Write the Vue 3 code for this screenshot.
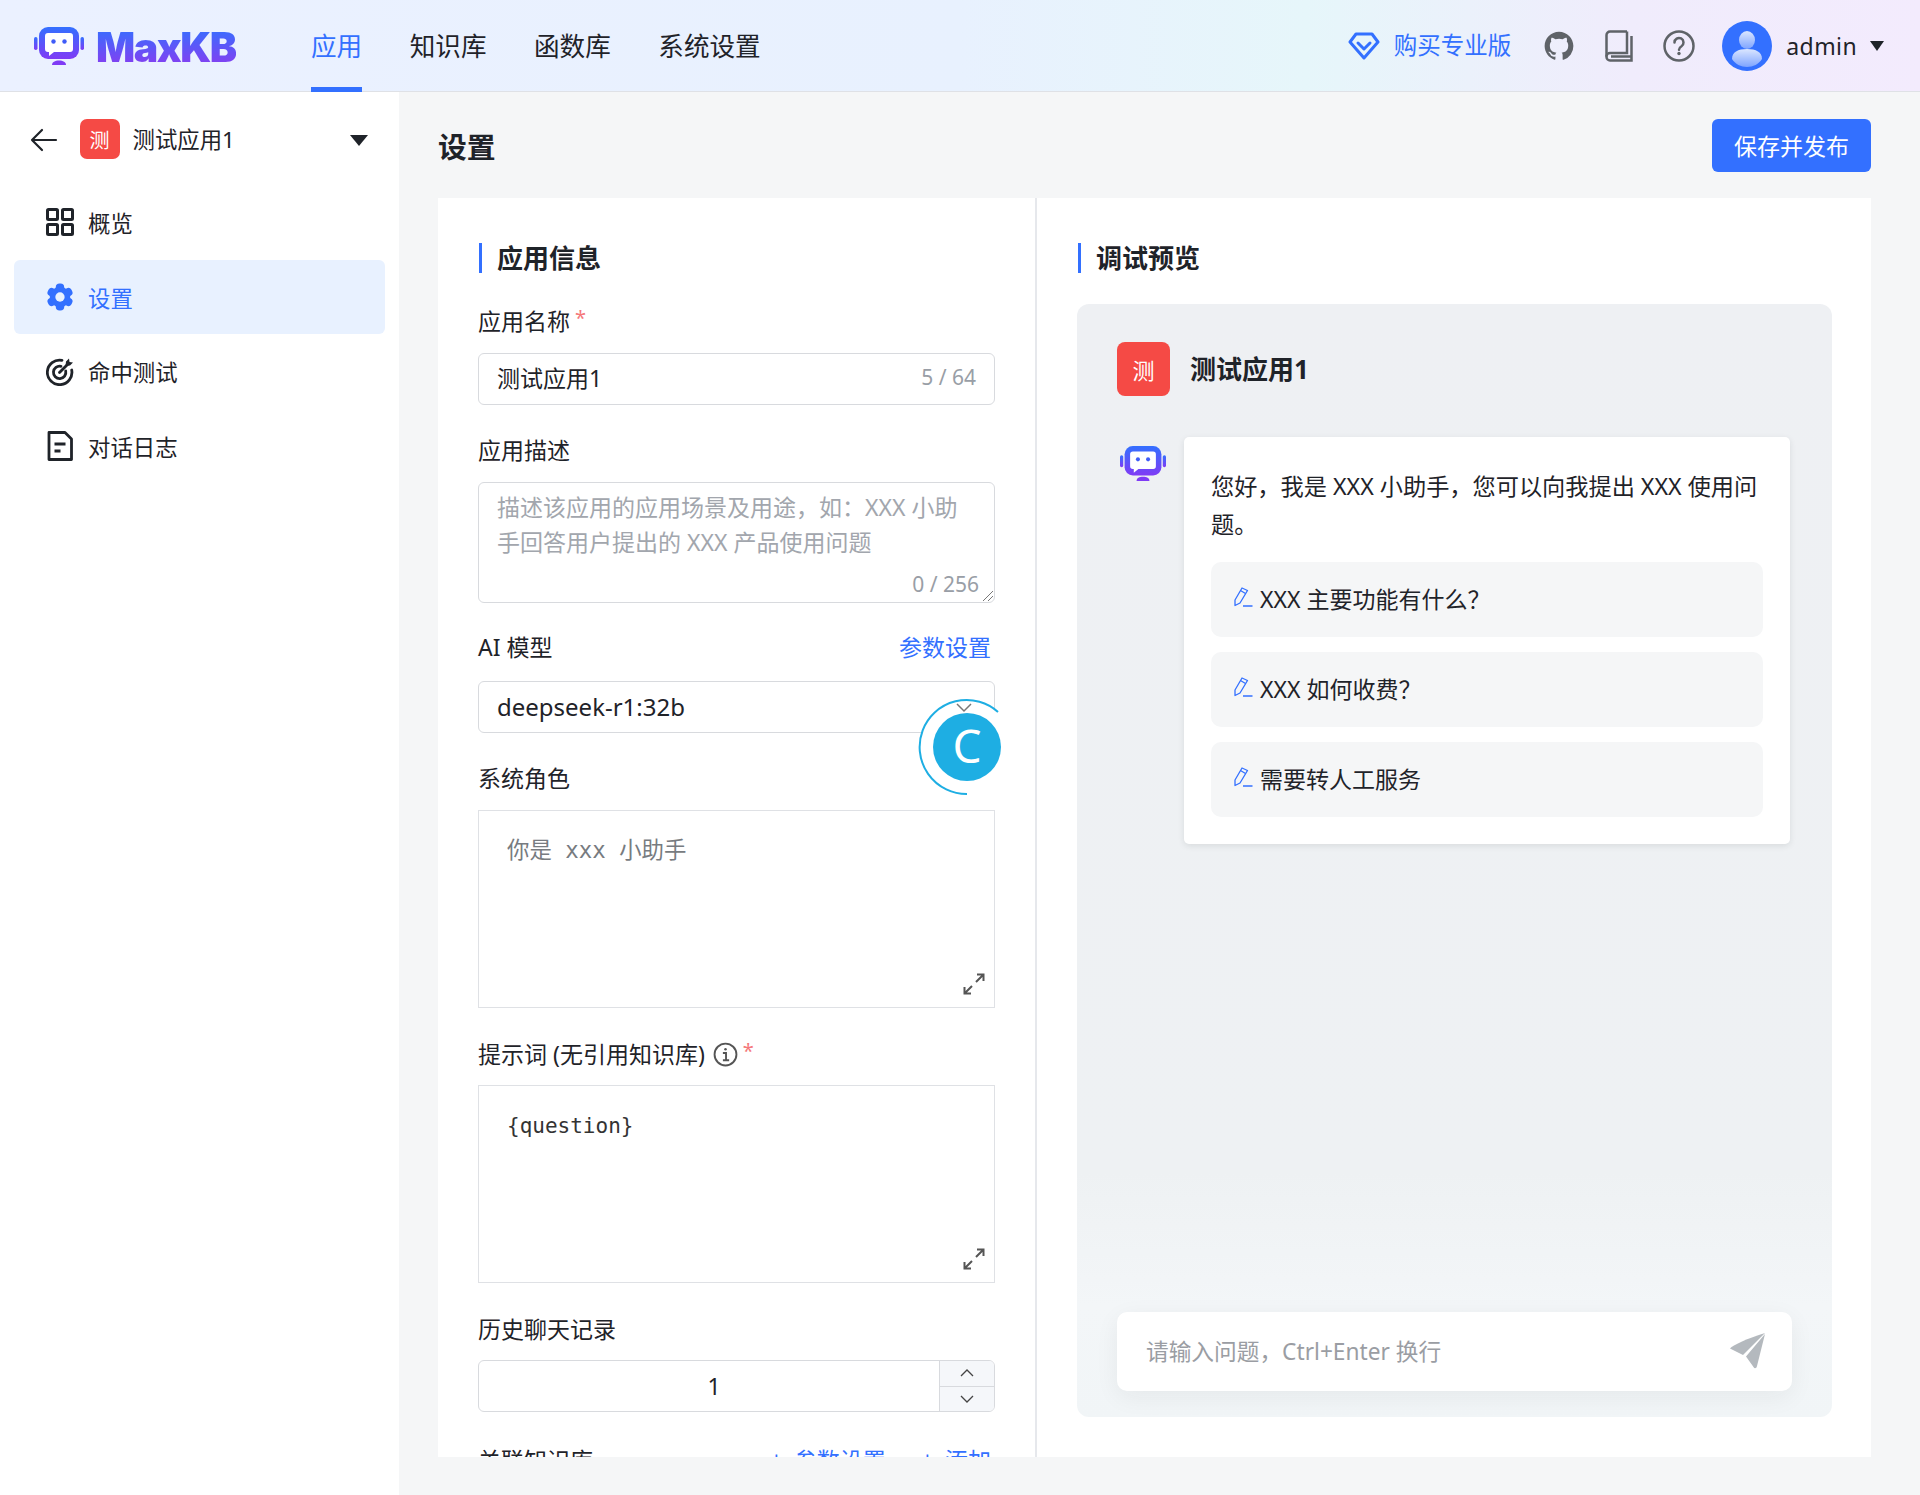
<template>
  <div class="app">
    <header class="top">
      <div class="brand">
        <svg class="logo-icon" viewBox="0 0 50 38">
          <defs>
            <linearGradient id="lg1" x1="0" y1="0" x2="0" y2="1">
              <stop offset="0" stop-color="#3370ff" />
              <stop offset="1" stop-color="#7f3bf5" />
            </linearGradient>
          </defs>
          <rect x="0" y="10" width="3.500" height="13" rx="1.700" fill="url(#lg1)" />
          <rect x="46.500" y="10" width="3.500" height="13" rx="1.700" fill="url(#lg1)" />
          <rect x="5" y="0" width="40" height="32" rx="9" fill="url(#lg1)" />
          <path d="M14 6h22a3 3 0 0 1 3 3v13a3 3 0 0 1-3 3H20l-5 4v-4h-1a3 3 0 0 1-3-3V9a3 3 0 0 1 3-3z" fill="#fff" />
          <circle cx="19.500" cy="14.500" r="2.200" fill="#3f5cf8" />
          <circle cx="30.500" cy="14.500" r="2.200" fill="#3f5cf8" />
          <path d="M18 38c0-3 3-4.500 7-4.500s7 1.500 7 4.500z" fill="#7f3bf5" />
        </svg>
        <span class="logo-text">MaxKB</span>
      </div>
      <nav class="nav">
        <a v-for="n in navItems" :key="n" class="nav-item" :class="{ on: n === '应用' }">{{ n }}</a>
      </nav>
      <div class="top-right">
        <a class="buy">
          <svg viewBox="0 0 32 28" width="32" height="28" fill="none" stroke="#3370ff" stroke-width="3" stroke-linejoin="round" stroke-linecap="round">
            <path d="M8 2h16l6 8-14 16L2 10z" />
            <path d="M10 11l6 6 6-6" />
          </svg>
          <span>购买专业版</span>
        </a>
        <svg class="ti" viewBox="0 0 24 24" width="30" height="30" fill="#5f6368">
          <path d="M12 .5C5.650.5.500 5.650.500 12c0 5.080 3.290 9.390 7.860 10.910.570.100.780-.250.780-.550v-2c-3.200.700-3.870-1.370-3.870-1.370-.520-1.330-1.280-1.680-1.280-1.680-1.040-.710.080-.700.080-.700 1.150.080 1.760 1.190 1.760 1.190 1.030 1.760 2.690 1.250 3.350.960.100-.750.400-1.250.730-1.540-2.550-.290-5.240-1.280-5.240-5.680 0-1.260.450-2.280 1.190-3.090-.120-.290-.520-1.460.110-3.050 0 0 .970-.310 3.170 1.180a11 11 0 0 1 5.770 0c2.200-1.490 3.170-1.180 3.170-1.180.630 1.590.230 2.760.110 3.050.740.810 1.190 1.830 1.190 3.090 0 4.410-2.690 5.390-5.250 5.670.410.360.780 1.060.780 2.140v3.170c0 .310.210.660.790.550A11.500 11.500 0 0 0 23.500 12C23.500 5.650 18.350.5 12 .5z" />
        </svg>
        <svg class="ti" viewBox="0 0 28 32" width="28" height="32" fill="none" stroke="#5f6368" stroke-width="2.500">
          <path d="M22 1.500H5A3.500 3.500 0 0 0 1.500 5v22A3.500 3.500 0 0 0 5 30.500h21.500V6" />
          <path d="M22 1.500V23H5a3.500 3.500 0 0 0-3.500 3.500" />
          <path d="M6 26.500h20" />
        </svg>
        <svg class="ti help" viewBox="0 0 32 32" width="32" height="32" fill="none" stroke="#5f6368" stroke-width="2.500">
          <circle cx="16" cy="16" r="14.500" />
          <path d="M11.500 12.500a4.500 4.500 0 1 1 7 3.700c-1.600 1-2.500 1.800-2.500 3.600" stroke-linecap="round" />
          <circle cx="16" cy="23.500" r="1.700" fill="#5f6368" stroke="none" />
        </svg>
        <div class="user">
          <svg class="avatar" viewBox="0 0 50 50">
            <defs>
              <linearGradient id="ua" x1="0" y1="0" x2="0" y2="1">
                <stop offset="0" stop-color="#dbe6ff" />
                <stop offset="1" stop-color="#7ea4ff" />
              </linearGradient>
            </defs>
            <circle cx="25" cy="25" r="25" fill="#3370ff" />
            <ellipse cx="25" cy="19" rx="8" ry="9" fill="url(#ua)" />
            <path d="M10 38c0-7 6-10 15-10s15 3 15 10c-3 5-9 8-15 8s-12-3-15-8z" fill="url(#ua)" />
          </svg>
          <span class="uname">admin</span>
          <i class="tri small" />
        </div>
      </div>
    </header>

    <div class="body">
      <aside class="side">
        <div class="side-head">
          <svg viewBox="0 0 28 24" width="28" height="24" fill="none" stroke="#1f2329" stroke-width="2.200" stroke-linecap="round" stroke-linejoin="round">
            <path d="M26 12H2M12 2L2 12l10 10" />
          </svg>
          <div class="app-ico">测</div>
          <span class="app-name">测试应用1</span>
          <i class="tri" />
        </div>
        <ul class="menu">
          <li class="m-item">
            <svg viewBox="0 0 28 28" width="28" height="28" fill="none" stroke="#1f2329" stroke-width="3">
              <rect x="1.500" y="1.500" width="10" height="10" rx="1" />
              <rect x="16.500" y="1.500" width="10" height="10" rx="1" />
              <rect x="1.500" y="16.500" width="10" height="10" rx="1" />
              <rect x="16.500" y="16.500" width="10" height="10" rx="1" />
            </svg>
            <span>概览</span>
          </li>
          <li class="m-item on">
            <svg viewBox="0 0 30 30" width="28" height="28" fill="#3370ff">
              <rect x="10.500" y="0.500" width="9" height="29" rx="4" />
              <rect x="10.500" y="0.500" width="9" height="29" rx="4" transform="rotate(60 15 15)" />
              <rect x="10.500" y="0.500" width="9" height="29" rx="4" transform="rotate(120 15 15)" />
              <circle cx="15" cy="15" r="11" />
              <circle cx="15" cy="15" r="5" fill="#e8f1ff" />
            </svg>
            <span>设置</span>
          </li>
          <li class="m-item">
            <svg viewBox="0 0 28 28" width="28" height="28" fill="none" stroke="#1f2329" stroke-width="2.800" stroke-linecap="round">
              <path d="M16 2.300A12.300 12.300 0 1 0 25.700 12" />
              <path d="M15 8.300A6.200 6.200 0 1 0 19.700 13" />
              <path d="M13.500 14.500L22 6" />
              <path d="M20 3.500l-.5 4.500 4.500-.5 3-3-3.500-.5-.5-3.500z" fill="#1f2329" stroke="none" />
            </svg>
            <span>命中测试</span>
          </li>
          <li class="m-item">
            <svg viewBox="0 0 28 30" width="28" height="30" fill="none" stroke="#1f2329" stroke-width="2.800" stroke-linejoin="round">
              <path d="M3 1.500h16l6.500 6.500v20.500H3z" />
              <path d="M8.500 13h11M8.500 20h6" />
            </svg>
            <span>对话日志</span>
          </li>
        </ul>
      </aside>

      <main class="main">
        <div class="page-head">
          <h2 class="page-title">设置</h2>
          <button class="save">保存并发布</button>
        </div>
        <div class="card">
          <section class="left">
            <div class="sec-title">应用信息</div>

            <div class="label first">应用名称 <em>*</em></div>
            <div class="input">
              <span class="val">测试应用1</span>
              <span class="count">5 / 64</span>
            </div>

            <div class="label mt">应用描述</div>
            <div class="input area">
              <p class="ph">描述该应用的应用场景及用途，如：XXX 小助手回答用户提出的 XXX 产品使用问题</p>
              <span class="count corner">0 / 256</span>
              <svg class="grip" viewBox="0 0 12 12" width="12" height="12" stroke="#777" stroke-width="1" fill="none">
                <path d="M11 1L1 11M11 6L6 11" />
              </svg>
            </div>

            <div class="label mt2 between">
              <span>AI 模型</span>
              <a class="link">参数设置</a>
            </div>
            <div class="input select">
              <span class="val">deepseek-r1:32b</span>
              <svg class="caret" viewBox="0 0 16 10" width="16" height="10" fill="none" stroke="#777" stroke-width="1.500">
                <path d="M1 1l7 7 7-7" />
              </svg>
              <svg class="float" viewBox="0 0 100 100" width="100" height="100">
                <circle cx="50" cy="50" r="47" fill="#fff" />
                <path d="M81 15A47 47 0 1 0 50 97" fill="none" stroke="#1eaee3" stroke-width="2" />
                <circle cx="50" cy="50" r="34" fill="#1eaee3" />
                <text x="50" y="66" text-anchor="middle" class="float-c">C</text>
              </svg>
            </div>

            <div class="label mt3">系统角色</div>
            <div class="code lower">
              <span class="code-text muted">你是 xxx 小助手</span>
              <svg class="expand" viewBox="0 0 22 22" width="22" height="22" fill="none" stroke="#555" stroke-width="2">
                <path d="M13 9l7-7M14 1.500h6.500V8M9 13l-7 7M1.500 14v6.500H8" />
              </svg>
            </div>

            <div class="label mt4">
              提示词 (无引用知识库)
              <svg class="info" viewBox="0 0 24 24" width="25" height="25" fill="none" stroke="#555" stroke-width="1.800">
                <circle cx="12" cy="12" r="10.500" />
                <path d="M9.500 10.500H12.500V17.500M9.500 17.500h6" />
                <circle cx="12" cy="7" r="1.200" fill="#555" stroke="none" />
              </svg>
              <em>*</em>
            </div>
            <div class="code">
              <span class="code-text">{question}</span>
              <svg class="expand" viewBox="0 0 22 22" width="22" height="22" fill="none" stroke="#555" stroke-width="2">
                <path d="M13 9l7-7M14 1.500h6.500V8M9 13l-7 7M1.500 14v6.500H8" />
              </svg>
            </div>

            <div class="label mt4">历史聊天记录</div>
            <div class="input number">
              <span class="num">1</span>
              <div class="steps">
                <span class="step">
                  <svg viewBox="0 0 14 8" width="14" height="8" fill="none" stroke="#444" stroke-width="1.300"><path d="M1 7l6-6 6 6" /></svg>
                </span>
                <span class="step">
                  <svg viewBox="0 0 14 8" width="14" height="8" fill="none" stroke="#444" stroke-width="1.300"><path d="M1 1l6 6 6-6" /></svg>
                </span>
              </div>
            </div>

            <div class="label mt5 between">
              <span>关联知识库</span>
              <span class="links">
                <a class="link"><b class="plus">+</b>参数设置</a>
                <a class="link"><b class="plus">+</b>添加</a>
              </span>
            </div>
          </section>

          <section class="right">
            <div class="sec-title">调试预览</div>
            <div class="chat">
              <div class="chat-head">
                <div class="app-ico big">测</div>
                <span class="chat-name">测试应用1</span>
              </div>
              <div class="chat-msg">
                <svg class="bot" viewBox="0 0 50 38">
                  <defs>
                    <linearGradient id="lg2" x1="0" y1="0" x2="0" y2="1">
                      <stop offset="0" stop-color="#3370ff" />
                      <stop offset="1" stop-color="#7f3bf5" />
                    </linearGradient>
                  </defs>
                  <rect x="0" y="10" width="3.500" height="13" rx="1.700" fill="url(#lg2)" />
                  <rect x="46.500" y="10" width="3.500" height="13" rx="1.700" fill="url(#lg2)" />
                  <rect x="5" y="0" width="40" height="32" rx="9" fill="url(#lg2)" />
                  <path d="M14 6h22a3 3 0 0 1 3 3v13a3 3 0 0 1-3 3H20l-5 4v-4h-1a3 3 0 0 1-3-3V9a3 3 0 0 1 3-3z" fill="#fff" />
                  <circle cx="19.500" cy="14.500" r="2.200" fill="#3f5cf8" />
                  <circle cx="30.500" cy="14.500" r="2.200" fill="#3f5cf8" />
                  <path d="M18 38c0-3 3-4.500 7-4.500s7 1.500 7 4.500z" fill="#7f3bf5" />
                </svg>
                <div class="bubble">
                  <p class="hello">您好，我是 XXX 小助手，您可以向我提出 XXX 使用问题。</p>
                  <div v-for="q in questions" :key="q" class="q">
                    <svg viewBox="0 0 20 20" width="20" height="20" fill="none" stroke="#3370ff" stroke-width="1.300" stroke-linejoin="round">
                      <path d="M9 1l5.500 2.500L7 16l-5 2.500V13z" />
                      <path d="M7.500 3.500l5 3M10 19h9.500" />
                    </svg>
                    <span>{{ q }}</span>
                  </div>
                </div>
              </div>
              <div class="ask">
                <span>请输入问题，Ctrl+Enter 换行</span>
                <svg viewBox="0 0 36 36" width="36" height="36" fill="#b4b9be">
                  <path d="M35 0L13 22 0 15.500C3 12 16 6 35 0z" />
                  <path d="M35 1L27 33c-.5 2.500-2.500 3-3.500 1L16 23.500z" />
                </svg>
              </div>
            </div>
          </section>
        </div>
      </main>
    </div>
  </div>
</template>

<script setup>
const navItems = ['应用', '知识库', '函数库', '系统设置']
const questions = ['XXX 主要功能有什么？', 'XXX 如何收费？', '需要转人工服务']
</script>

<style>
html, body { margin: 0; background: #f5f6f7; }
</style>

<style scoped>
* { box-sizing: border-box; }

.app {
  width: 1920px;
  height: 1495px;
  display: flex;
  flex-direction: column;
  font-family: "Noto Sans", "Noto Sans CJK SC", sans-serif;
  font-size: 23px;
  color: #1f2329;
  overflow: hidden;
}

.top {
  height: 92px;
  flex: none;
  display: flex;
  align-items: center;
  padding: 0 36px 0 34px;
  border-bottom: 1px solid #dfe1e6;
  background: linear-gradient(90deg, #ebf1ff 0%, #e8f1fe 50%, #e6f6fa 68%, #f0ecfc 85%, #f3ebfd 100%);
}
.brand { display: flex; align-items: center; gap: 12px; width: 277px; }
.logo-icon { width: 50px; height: 38px; }
.logo-text {
  font-family: Inter, sans-serif;
  font-weight: 900;
  font-size: 41px;
  letter-spacing: -1.500px;
  line-height: 1;
  position: relative;
  top: 2px;
  background: linear-gradient(180deg, #3370ff, #8b3bf0);
  -webkit-background-clip: text;
  background-clip: text;
  color: transparent;
}
.nav { display: flex; gap: 47.500px; height: 100%; }
.nav-item {
  font-size: 25.600px;
  line-height: 93px;
  height: 92px;
  color: #1f2329;
  position: relative;
}
.nav-item.on { color: #3370ff; }
.nav-item.on::after {
  content: '';
  position: absolute;
  left: 0; right: 0; bottom: 0;
  height: 5px;
  background: #3370ff;
}
.top-right { margin-left: auto; display: flex; align-items: center; }
.buy { display: flex; align-items: center; gap: 14px; color: #3370ff; margin-right: 33px; font-size: 23.500px; line-height: 30px; }
.buy span { position: relative; top: -1px; }
.ti { flex: none; margin-right: 30px; }
.ti:nth-of-type(1) { margin-right: 31px; }
.ti.help { margin-right: 27px; }
.user { display: flex; align-items: center; }
.avatar { width: 50px; height: 50px; }
.uname { margin: 0 13px 0 14px; letter-spacing: .4px; }

.tri {
  width: 0; height: 0;
  border-left: 9px solid transparent;
  border-right: 9px solid transparent;
  border-top: 11px solid #1f2329;
  display: block;
}
.tri.small { border-left-width: 7.500px; border-right-width: 7.500px; border-top-width: 10px; }

.body { flex: 1; display: flex; min-height: 0; }

.side { width: 399px; flex: none; background: #fff; padding: 28px 14px 0; }
.side-head { display: flex; align-items: center; height: 40px; padding: 0 17px 0 16px; }
.app-ico {
  width: 40px; height: 40px;
  border-radius: 7px;
  background: #f54a45;
  color: #fff;
  font-size: 20px;
  display: flex; align-items: center; justify-content: center;
  margin-left: 21.500px;
}
.side-head .app-ico { position: relative; top: -1px; }
.app-name { margin-left: 13px; font-size: 22.400px; flex: 1; position: relative; top: -2px; }
.menu { list-style: none; margin: 25px 0 0; padding: 0; display: flex; flex-direction: column; }
.m-item {
  height: 74.700px;
  display: flex; align-items: center;
  gap: 14px;
  padding-left: 32px;
  font-size: 22.400px;
  border-radius: 6px;
}
.m-item svg { flex: none; }
.m-item.on { background: #e8f1ff; color: #3370ff; }

.main { flex: 1; min-width: 0; padding: 27px 49px 38px 39px; display: flex; flex-direction: column; }
.page-head { height: 53px; display: flex; align-items: center; justify-content: space-between; margin-bottom: 26px; flex: none; }
.page-title { margin: 0; font-size: 28.800px; font-weight: 700; }
.save {
  width: 159px; height: 53px;
  background: #3370ff;
  color: #fff;
  border: 0;
  border-radius: 6px;
  font: inherit;
  padding: 0 0 2px;
}
.card { flex: 1; min-height: 0; background: #fff; display: flex; }

.sec-title {
  height: 30px;
  line-height: 30px;
  border-left: 3px solid #3370ff;
  padding-left: 15px;
  font-size: 26px;
  font-weight: 700;
  margin-left: 1px;
}

.left {
  width: 599px;
  flex: none;
  padding: 45px 40px 0 40px;
  border-right: 2px solid #e6e8ec;
  overflow: hidden;
}
.label { font-size: 23px; line-height: 34px; height: 34px; display: flex; align-items: center; gap: 5px; white-space: nowrap; }
.label em { color: #f5787a; font-style: normal; font-size: 20px; position: relative; top: -3px; }
.label.first { margin-top: 31px; }
.label.mt { margin-top: 28px; }
.label.mt2 { margin-top: 27px; }
.label.mt3 { margin-top: 28px; }
.label.mt4 { margin-top: 29px; }
.label.mt5 { margin-top: 30.500px; }
.between { justify-content: space-between; }
.link { color: #3370ff; padding-right: 4px; }
.plus { font-weight: 400; margin-right: 11px; }
.links { display: flex; gap: 31px; }

.input {
  margin-top: 15px;
  height: 52px;
  border: 1.300px solid #d8dade;
  border-radius: 6px;
  display: flex;
  align-items: center;
  padding: 0 18px 4px;
  position: relative;
  background: #fff;
}
.val { flex: 1; }
.count { font-size: 21px; color: #999ea6; }
.area { height: 121px; display: block; padding: 7px 18px; }
.ph { margin: 0; color: #a2a6ad; line-height: 35px; width: 480px; }
.corner { position: absolute; right: 15px; bottom: 4px; }
.grip { position: absolute; right: 0; bottom: 0; }
.select { z-index: 1; margin-top: 17px; font-size: 24px; padding-bottom: 2px; }
.caret { position: absolute; right: 22px; top: 21px; z-index: 2; }
.float { position: absolute; left: 438px; top: 15px; z-index: 1; }
.float-c { font-size: 46px; fill: #fff; font-family: "Noto Sans", sans-serif; }

.number { margin-top: 14px; padding: 0; overflow: hidden; }
.num { flex: 1; text-align: center; padding-left: 10px; }
.steps { width: 55px; height: 100%; display: flex; flex-direction: column; border-left: 1.300px solid #d8dade; background: #f5f7fa; }
.step { flex: 1; display: flex; align-items: center; justify-content: center; }
.step + .step { border-top: 1.300px solid #d8dade; }

.code {
  margin-top: 14px;
  height: 198px;
  border: 1.300px solid #dfe1e5;
  position: relative;
  padding: 22px 28px;
}
.code.lower { margin-top: 15px; }
.code-text { font-family: "DejaVu Sans Mono", "Noto Sans CJK SC", monospace; font-size: 21px; color: #333; line-height: 34px; white-space: pre; }
.code-text.muted { color: #777b80; font-size: 22.400px; }
.expand { position: absolute; right: 9px; bottom: 12px; }
.info { flex: none; margin-left: 3px; }

.right { flex: 1; min-width: 0; padding: 45px 39px 40px 40px; display: flex; flex-direction: column; }
.right .sec-title { margin-left: 1px; }
.chat {
  margin-top: 31px;
  flex: 1;
  min-height: 0;
  display: flex;
  flex-direction: column;
  border-radius: 12px;
  background: linear-gradient(180deg, #eef0f3 0%, #eef1f3 78%, #f3f6f8 90%, #f1f5f7 100%);
  padding: 38px 40px 26px;
}
.chat-head { display: flex; align-items: center; }
.app-ico.big { width: 53px; height: 54px; border-radius: 8px; margin-left: 0; font-size: 22px; }
.chat-name { margin-left: 20px; font-size: 26px; font-weight: 700; position: relative; top: -1px; }
.chat-msg { display: flex; margin-top: 41px; flex: 1; min-height: 0; align-items: flex-start; }
.bot { width: 46px; height: 35px; margin-top: 9px; flex: none; margin-left: 3px; }
.bubble {
  margin-left: 18px;
  width: 606px;
  height: 407px;
  background: #fff;
  border-radius: 5px;
  box-shadow: 0 2px 6px rgba(31, 35, 41, .1);
  padding: 30px 27px;
  font-size: 23.200px;
}
.hello { margin: 0 0 19px; line-height: 38px; }
.q {
  height: 75px;
  background: #f5f6f7;
  border-radius: 10px;
  display: flex;
  align-items: center;
  gap: 7px;
  padding: 0 22px 4px;
  margin-bottom: 15px;
  font-size: 23px;
}
.q svg { position: relative; top: -1px; }
.q:last-child { margin-bottom: 0; }
.ask {
  height: 79px;
  background: #fff;
  border-radius: 10px;
  width: 675px;
  display: flex;
  align-items: center;
  justify-content: space-between;
  padding: 0 26px 2px 29px;
  color: #9a9da3;
  font-size: 22.700px;
  box-shadow: 0 6px 24px rgba(31, 35, 41, .06);
  flex: none;
}
</style>
